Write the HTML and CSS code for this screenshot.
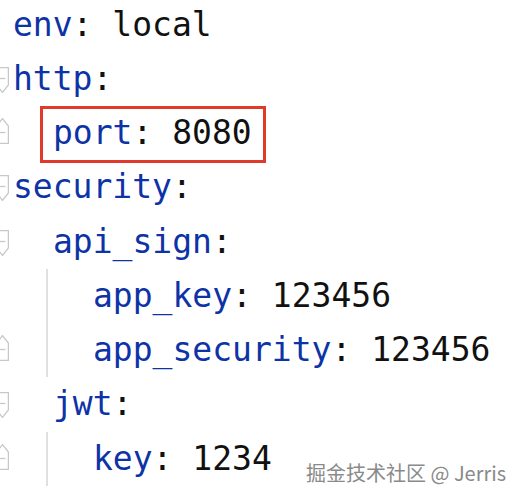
FILE: index.html
```html
<!DOCTYPE html>
<html lang="zh-CN">
<head>
<meta charset="utf-8">
<title>application.yml</title>
<link rel="stylesheet" href="styles.css">
</head>
<body>
<div class="editor">
  <div class="line">
    <span class="gutter"></span>
    <span class="code"><span class="k">env</span>: local</span>
  </div>
  <div class="line">
    <span class="gutter"><svg class="fold open" width="13" height="26" viewBox="0 0 13 26"><path d="M0.6 0.6H12.4V18L6.5 25.4L0.6 18Z"/><path d="M3.5 11.5H9.5"/></svg></span>
    <span class="code"><span class="k">http</span>:</span>
  </div>
  <div class="line">
    <span class="gutter"><svg class="fold close" width="13" height="26" viewBox="0 0 13 26"><path d="M0.6 25.4H12.4V8L6.5 0.6L0.6 8Z"/><path d="M3.5 14.5H9.5"/></svg></span>
    <span class="ind"></span>
    <span class="code boxed"><span class="k">port</span>: 8080</span>
  </div>
  <div class="line">
    <span class="gutter"><svg class="fold open" width="13" height="26" viewBox="0 0 13 26"><path d="M0.6 0.6H12.4V18L6.5 25.4L0.6 18Z"/><path d="M3.5 11.5H9.5"/></svg></span>
    <span class="code"><span class="k">security</span>:</span>
  </div>
  <div class="line">
    <span class="gutter"><svg class="fold open" width="13" height="26" viewBox="0 0 13 26"><path d="M0.6 0.6H12.4V18L6.5 25.4L0.6 18Z"/><path d="M3.5 11.5H9.5"/></svg></span>
    <span class="ind"></span>
    <span class="code"><span class="k">api_sign</span>:</span>
  </div>
  <div class="line">
    <span class="gutter"></span>
    <span class="ind guide"></span>
    <span class="ind"></span>
    <span class="code"><span class="k">app_key</span>: 123456</span>
  </div>
  <div class="line">
    <span class="gutter"><svg class="fold close" width="13" height="26" viewBox="0 0 13 26"><path d="M0.6 25.4H12.4V8L6.5 0.6L0.6 8Z"/><path d="M3.5 14.5H9.5"/></svg></span>
    <span class="ind guide"></span>
    <span class="ind"></span>
    <span class="code"><span class="k">app_security</span>: 123456</span>
  </div>
  <div class="line">
    <span class="gutter"><svg class="fold open" width="13" height="26" viewBox="0 0 13 26"><path d="M0.6 0.6H12.4V18L6.5 25.4L0.6 18Z"/><path d="M3.5 11.5H9.5"/></svg></span>
    <span class="ind"></span>
    <span class="code"><span class="k">jwt</span>:</span>
  </div>
  <div class="line">
    <span class="gutter"><svg class="fold close" width="13" height="26" viewBox="0 0 13 26"><path d="M0.6 25.4H12.4V8L6.5 0.6L0.6 8Z"/><path d="M3.5 14.5H9.5"/></svg></span>
    <span class="ind guide"></span>
    <span class="ind"></span>
    <span class="code"><span class="k">key</span>: 1234</span>
  </div>
</div>
<div class="watermark">掘金技术社区 @ Jerris</div>
</body>
</html>
```

FILE: styles.css
```css
html, body {
  margin: 0;
  padding: 0;
  background: #ffffff;
}

body {
  width: 522px;
  height: 496px;
  overflow: hidden;
  position: relative;
}

.editor {
  margin-top: -2.5px;
  font-family: "DejaVu Sans Mono", "Liberation Mono", monospace;
  font-size: 33px;
  color: #111111;
}

.line {
  display: flex;
  align-items: stretch;
  height: 54.25px;
  line-height: 54.25px;
  white-space: pre;
}

.gutter {
  width: 13px;
  flex: none;
  position: relative;
}

.fold {
  position: absolute;
  left: -4px;
  fill: none;
  stroke: #c8c8c8;
  stroke-width: 1.3;
}

.fold.open {
  top: 15px;
}

.fold.close {
  top: 12px;
}

.ind {
  width: 40px;
  flex: none;
}

.guide {
  background: linear-gradient(#e0e0e0, #e0e0e0) no-repeat 33px 0 / 2px 100%;
}

.code {
  display: block;
}

.k {
  color: #0d33a6;
}

.boxed {
  position: relative;
}

.boxed::before {
  content: "";
  position: absolute;
  left: -13px;
  top: 0;
  width: 226px;
  height: 57px;
  border: 3px solid #e03a2c;
  box-sizing: border-box;
}

.watermark {
  position: absolute;
  left: 306px;
  top: 459px;
  font-family: "Noto Sans CJK SC", "Noto Sans", sans-serif;
  font-size: 20px;
  line-height: 28px;
  color: #8a8a8a;
  text-shadow: 0 0 2px #ffffff, 0 0 1px #ffffff;
  white-space: nowrap;
}
```
